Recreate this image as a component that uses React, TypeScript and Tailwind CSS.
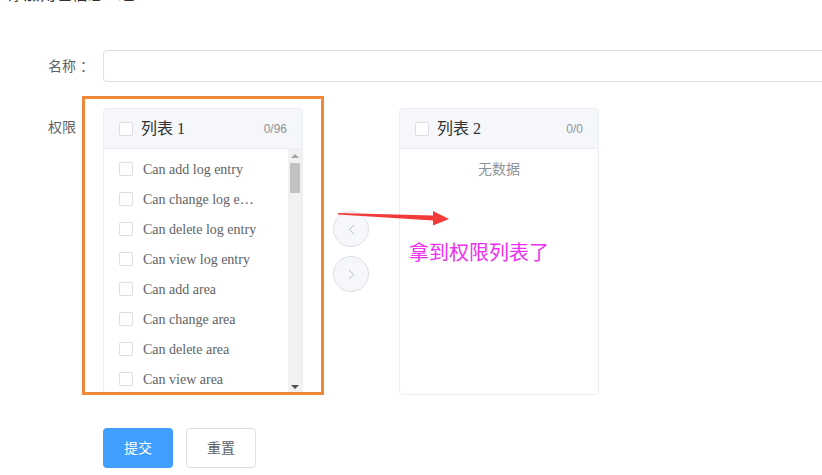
import { ChevronLeft, ChevronRight } from 'lucide-react'

const items = [
  'Can add log entry',
  'Can change log entry',
  'Can delete log entry',
  'Can view log entry',
  'Can add area',
  'Can change area',
  'Can delete area',
  'Can view area'
]

const sans = 'font-["Liberation_Sans","Noto_Sans_CJK_SC",sans-serif]'
const serif = 'font-["Liberation_Serif","Noto_Sans_CJK_SC",serif]'

const Checkbox = () => (
  <span className="inline-block h-[14px] w-[14px] shrink-0 rounded-[2px] border border-[#dcdfe6] bg-white" />
)

const PanelHeader = ({ title, count }: { title: string; count: string }) => (
  <div className="flex h-[40px] items-center border-b border-[#ebeef5] bg-[#f5f7fa] pl-[15px] pr-[15px]">
    <Checkbox />
    <span className={`ml-[8px] text-[16px] text-[#303133] ${serif}`}>{title}</span>
    <span className={`ml-auto text-[12px] text-[#909399] ${sans}`}>{count}</span>
  </div>
)

export default function App() {
  return (
    <div className={`relative h-[475px] w-[822px] overflow-hidden bg-white ${sans}`}>
      {/* cut off page title */}
      <div className="h-[4px] overflow-hidden pl-[8px]">
        <div className="-mt-[14px] text-[16px] leading-[18px] text-[#303133]">添加角色信息 · 组</div>
      </div>

      {/* 名称 */}
      <div className="mt-[46px] flex items-center">
        <label className="w-[103px] shrink-0 pl-[48px] text-[14px] text-[#606266]">名称 ：</label>
        <input className="h-[32px] w-[740px] shrink-0 rounded-[4px] border border-[#dcdfe6] px-[15px] outline-none" />
      </div>

      {/* 权限 */}
      <div className="mt-[26px] flex items-start">
        <label className="w-[103px] shrink-0 pl-[48px] text-[14px] leading-[38px] text-[#606266]">权限</label>
        <div className="flex items-center">
          {/* 列表 1 */}
          <div className="flex h-[287px] w-[200px] flex-col overflow-hidden rounded-[4px] border border-[#ebeef5] bg-white">
            <PanelHeader title="列表 1" count="0/96" />
            <div className="flex flex-1 overflow-hidden">
              <div className="flex-1 pt-[5px]">
                {items.map((item) => (
                  <div key={item} className="flex h-[30px] items-center pl-[15px]">
                    <Checkbox />
                    <span className={`ml-[10px] w-[114px] truncate text-[14px] text-[#606266] ${serif}`}>{item}</span>
                  </div>
                ))}
              </div>
              {/* scrollbar */}
              <div className="flex w-[14px] flex-col items-center bg-[#f1f1f1]">
                <div className="mt-[5px] h-0 w-0 border-x-[4px] border-b-[4px] border-x-transparent border-b-[#a3a3a3]" />
                <div className="mt-[5px] h-[30px] w-[10px] bg-[#c1c1c1]" />
                <div className="mt-auto mb-[5px] h-0 w-0 border-x-[4px] border-t-[4px] border-x-transparent border-t-[#505050]" />
              </div>
            </div>
          </div>

          {/* transfer buttons */}
          <div className="mx-[30px] flex flex-col gap-[9px]">
            <button className="flex h-[36px] w-[36px] items-center justify-center rounded-full border border-[#dcdfe6] bg-[#f5f7fa] text-[#b4b8c0]">
              <ChevronLeft size={17} strokeWidth={1.3} />
            </button>
            <button className="flex h-[36px] w-[36px] items-center justify-center rounded-full border border-[#dcdfe6] bg-[#f5f7fa] text-[#b4b8c0]">
              <ChevronRight size={17} strokeWidth={1.3} />
            </button>
          </div>

          {/* 列表 2 */}
          <div className="flex h-[287px] w-[200px] flex-col overflow-hidden rounded-[4px] border border-[#ebeef5] bg-white">
            <PanelHeader title="列表 2" count="0/0" />
            <div className="pt-[5px] text-center text-[14px] leading-[30px] text-[#909399]">无数据</div>
          </div>
        </div>
      </div>

      {/* buttons */}
      <div className="mt-[33px] flex gap-[13px] pl-[103px]">
        <button className="h-[40px] w-[70px] rounded-[4px] bg-[#409eff] text-[14px] text-white">提交</button>
        <button className="h-[40px] w-[70px] rounded-[4px] border border-[#dcdfe6] bg-white text-[14px] text-[#606266]">重置</button>
      </div>

      {/* annotation: orange box */}
      <div className="absolute left-[82px] top-[96px] h-[299px] w-[242px] border-[3px] border-[#f0883a]" />

      {/* annotation: red arrow */}
      <svg className="absolute left-0 top-0" width="822" height="475">
        <polygon
          points="338,213 433,215.5 433,211 449,219 433,225.5 433,220.5 338,214.5"
          fill="#f23a3a"
        />
      </svg>

      {/* annotation: text */}
      <div className="absolute left-[409px] top-[239px] text-[20px] leading-[28px] text-[#ee2ef0]">拿到权限列表了</div>
    </div>
  )
}
